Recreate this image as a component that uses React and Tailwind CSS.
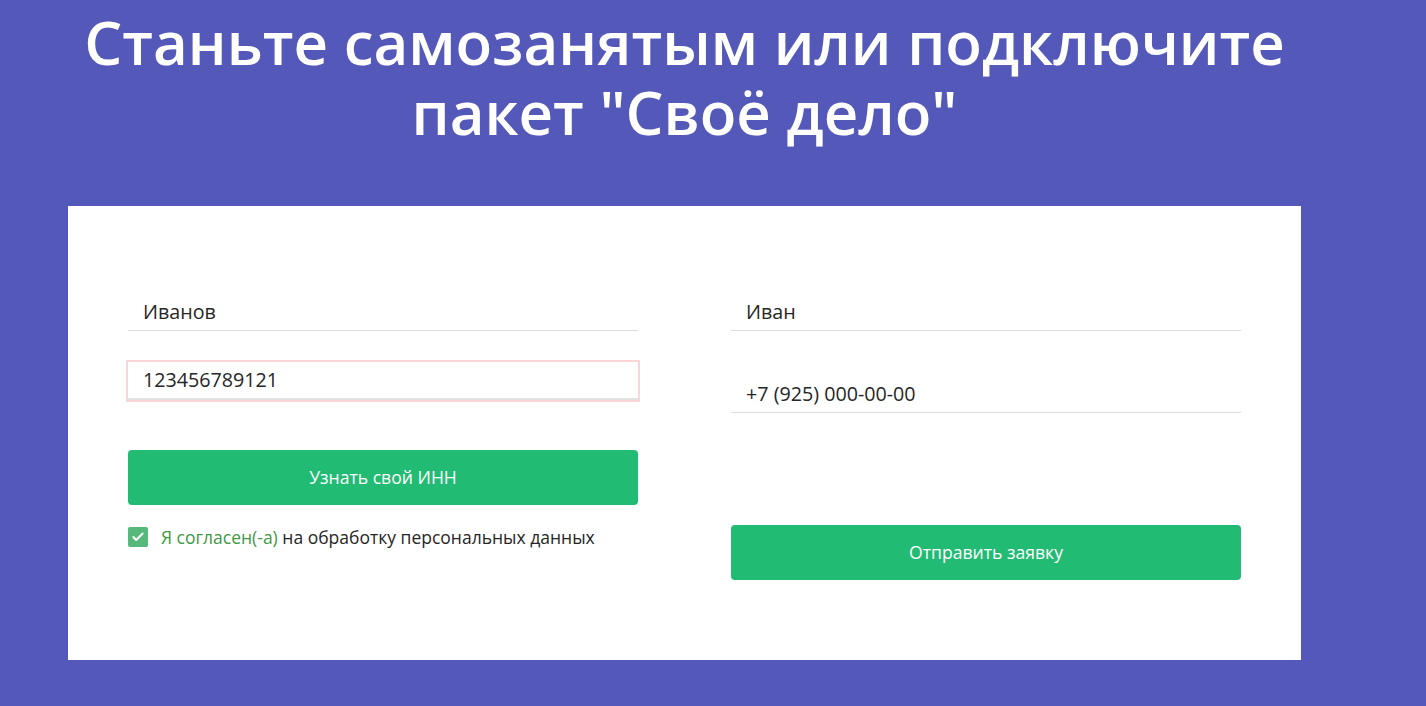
import { Check } from 'lucide-react'

const font = { fontFamily: '"Open Sans", "Noto Sans", sans-serif' }

function Field({ value, className = '' }) {
  return (
    <div className={`border-b border-[#dcdcdc] pt-[13px] pb-[5px] px-[15px] text-[19.7px] leading-[26px] text-[#262626] ${className}`}>
      {value}
    </div>
  )
}

function GreenButton({ children, className = '' }) {
  return (
    <button className={`w-full h-[55px] rounded-[4px] bg-[#21bb73] text-white text-[17.6px] ${className}`}>
      {children}
    </button>
  )
}

export default function App() {
  return (
    <div className="min-h-[706px] bg-[#5358b9]" style={font}>
      <div className="ml-[68px] w-[1233px]">
        <h1 className="pt-[7px] text-center text-[60px] leading-[70px] font-semibold text-white">
          Станьте самозанятым или подключите
          <br />
          пакет "Своё дело"
        </h1>

        <div className="mt-[59px] h-[454px] bg-white px-[60px] pt-[80px] flex gap-[93px]">
          {/* left column */}
          <div className="w-[510px]">
            <Field value="Иванов" />
            <div className="mt-[31px] h-[38px] ring-2 ring-[#fcd6d6] border-b-2 border-[#e2e2e2] px-[15px] pt-[5px] text-[19.7px] leading-[26px] text-[#262626]">
              123456789121
            </div>
            <GreenButton className="mt-[50px]">Узнать свой ИНН</GreenButton>
            <label className="mt-[22px] flex items-center gap-[13px] text-[17.5px] leading-[20px] text-[#262626]">
              <span className="w-[20px] h-[20px] rounded-[2px] bg-[#56b87a] flex items-center justify-center">
                <Check size={14} strokeWidth={3.5} color="white" />
              </span>
              <span>
                <span className="text-[#3d9a45]">Я согласен(-а)</span> на обработку персональных данных
              </span>
            </label>
          </div>

          {/* right column */}
          <div className="w-[510px]">
            <Field value="Иван" />
            <Field value="+7 (925) 000-00-00" className="mt-[37px]" />
            <GreenButton className="mt-[112px]">Отправить заявку</GreenButton>
          </div>
        </div>
      </div>
    </div>
  )
}
